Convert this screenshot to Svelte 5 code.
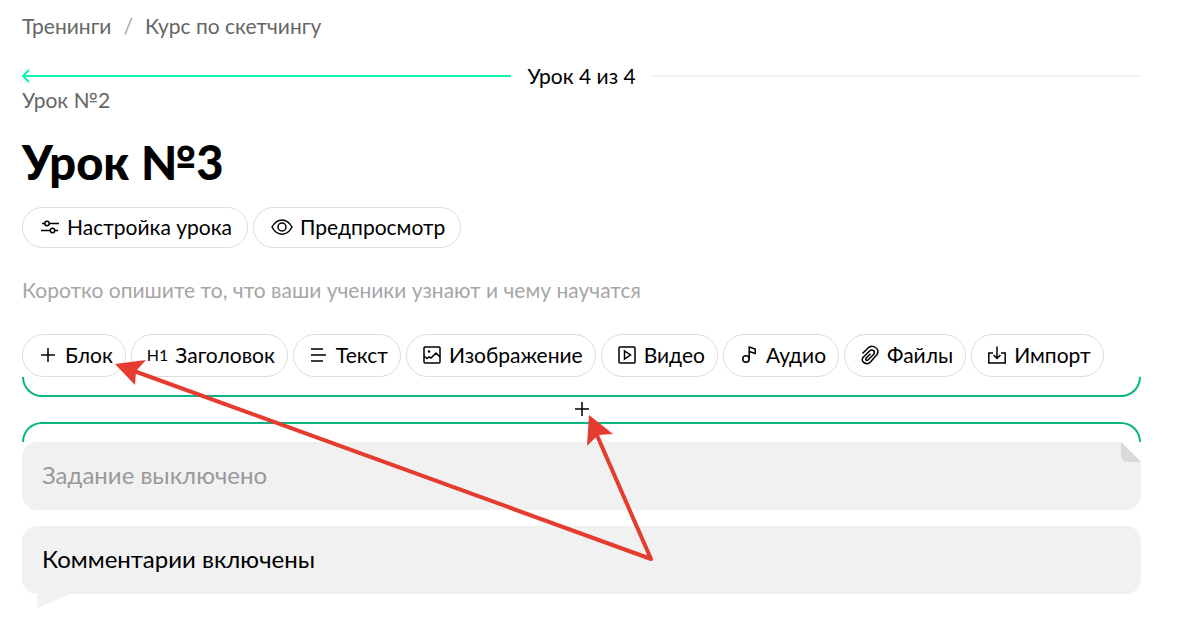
<script>
	let summary = '';

	const blocks = [
		{ id: 'block', label: 'Блок' },
		{ id: 'heading', label: 'Заголовок' },
		{ id: 'text', label: 'Текст' },
		{ id: 'image', label: 'Изображение' },
		{ id: 'video', label: 'Видео' },
		{ id: 'audio', label: 'Аудио' },
		{ id: 'files', label: 'Файлы' },
		{ id: 'import', label: 'Импорт' }
	];
</script>

<main class="page">
	<nav class="breadcrumbs">
		<a href="#trainings">Тренинги</a>
		<span class="slash">/</span>
		<a href="#course">Курс по скетчингу</a>
	</nav>

	<div class="progress">
		<div class="line done">
			<svg class="arrow-left" width="8" height="14" viewBox="0 0 8 14">
				<path d="M7 1 1 7l6 6" />
			</svg>
		</div>
		<span class="counter">Урок 4 из 4</span>
		<div class="line"></div>
	</div>
	<a class="prev" href="#lesson-2">Урок №2</a>

	<h1>Урок №3</h1>

	<div class="actions">
		<button class="pill">
			<svg class="icon" width="18" height="20" viewBox="0 0 18 20">
				<path d="M1 6.500h3M8 6.500h10M0 13.500h9M14 13.500h3" />
				<circle cx="6" cy="6.500" r="2.200" />
				<circle cx="11.500" cy="13.500" r="2.200" />
			</svg>
			Настройка урока
		</button>
		<button class="pill">
			<svg class="icon" width="20" height="20" viewBox="0 0 20 20">
				<path d="M0 10C5 .5 15 .5 20 10 15 19.500 5 19.500 0 10z" />
				<circle cx="10" cy="10" r="4" />
			</svg>
			Предпросмотр
		</button>
	</div>

	<input
		class="summary"
		type="text"
		aria-label="Описание урока"
		placeholder="Коротко опишите то, что ваши ученики узнают и чему научатся"
		bind:value={summary}
	/>

	<div class="toolbar">
		{#each blocks as block}
			<button class="pill tall">
				{#if block.id === 'heading'}
					<span class="h1-mark">H1</span>
				{:else}
					<svg class="icon" width="20" height="20" viewBox="0 0 20 20">
						{#if block.id === 'block'}
							<path d="M10 3v14M3 10h14" />
						{:else if block.id === 'text'}
							<path d="M2 4h12M2 10h15M2 16h12" />
						{:else if block.id === 'image'}
							<rect x="2" y="2" width="16" height="16" rx="1" />
							<path d="M2 11l3 2.500 2-1.500 2 1 5-5 4 4" />
							<circle class="dot" cx="7" cy="6.500" r="1.200" />
						{:else if block.id === 'video'}
							<rect x="2" y="2" width="16" height="16" rx="1" />
							<path d="M7.500 6v8l6-4z" />
						{:else if block.id === 'audio'}
							<circle cx="7" cy="14" r="3.200" />
							<path d="M10.200 14V2l6 2v4.500l-6-2" />
						{:else if block.id === 'files'}
							<path
								d="M2.500 8.500l5.500-5.500c4.500-4.500 12.500 1 9 6.500l-6.500 7.500C6.500 21 0 16.500 3 12.500L9.500 6c3-2.500 6.500.5 4 3.500L8 15c-1.500 1-3-.5-1.800-2l4.300-4.300"
							/>
						{:else}
							<path d="M6 8H1.800v10h16.400V8H14M10 1.500v11.500M6.500 10l3.500 3.500 3.500-3.500" />
						{/if}
					</svg>
				{/if}
				{block.label}
			</button>
		{/each}
	</div>

	<div class="bracket bottom"></div>
	<button class="add" aria-label="Добавить блок">
		<svg class="icon" width="16" height="16" viewBox="0 0 16 16">
			<path d="M8 1v14M1 8h14" />
		</svg>
	</button>
	<div class="bracket top"></div>

	<button class="bar task">
		Задание выключено
		<svg class="fold" width="20" height="20" viewBox="0 0 20 20">
			<path class="cut" d="M0 0h20v20z" />
			<path class="flap" d="M0 0v13q0 7 7 7h13z" />
		</svg>
	</button>
	<button class="bar comments">
		Комментарии включены
		<svg class="tail" width="36" height="15" viewBox="0 0 36 15">
			<path d="M0 0h36L0 15z" />
		</svg>
	</button>

	<svg class="pointers" width="1199" height="623" viewBox="0 0 1199 623">
		<path class="shaft" d="M134 371 651 559 596 433" />
		<path class="head" d="M115 364l31-4-10 11-1 14z" />
		<path class="head" d="M589 415l24 19-15 1-11 11z" />
	</svg>
</main>

<style>
	:global(body) {
		margin: 0;
		background: #fff;
	}

	.page {
		position: relative;
		box-sizing: border-box;
		padding: 12px 58px 28px 22px;
		font-family: Lato, 'Open Sans', sans-serif;
		font-size: 21px;
		line-height: 28px;
		color: #000;
		overflow: hidden;
	}

	a {
		color: #666;
		text-decoration: none;
	}

	button {
		margin: 0;
		font: inherit;
		color: inherit;
		cursor: pointer;
	}

	.breadcrumbs {
		display: flex;
		gap: 12px;
	}

	.slash {
		color: #aaa;
	}

	.progress {
		display: flex;
		align-items: center;
		gap: 16px;
		margin-top: 22px;
	}

	.line {
		position: relative;
		flex: 1;
		height: 2px;
		background: #f1f1f1;
	}

	.done {
		background: #13f2b0;
	}

	.arrow-left {
		position: absolute;
		left: 0;
		top: -6px;
		fill: none;
		stroke: #13f2b0;
		stroke-width: 2;
	}

	.prev {
		display: block;
		line-height: 20px;
	}

	h1 {
		margin: 24px 0 17px;
		font-size: 47px;
		line-height: 56px;
		font-weight: 900;
	}

	.actions,
	.toolbar {
		display: flex;
		flex-wrap: wrap;
		gap: 5px;
	}

	.pill {
		display: flex;
		align-items: center;
		justify-content: center;
		gap: 8px;
		box-sizing: border-box;
		height: 41px;
		padding: 0 15px 1px 18px;
		border: 1px solid #dcdcdc;
		border-radius: 22px;
		background: #fff;
		white-space: nowrap;
	}

	.tall {
		gap: 7px;
		height: 43px;
		padding: 0 12px 1px 15px;
	}

	.icon {
		flex: none;
		fill: none;
		stroke: #000;
		stroke-width: 1.5;
		overflow: visible;
	}

	.dot {
		fill: #000;
		stroke: none;
	}

	.h1-mark {
		font-size: 16px;
	}

	.summary {
		display: block;
		box-sizing: border-box;
		width: 100%;
		margin: 26px 0 30px;
		padding: 0;
		border: 0;
		outline: 0;
		background: none;
		font: inherit;
		height: 30px;
	}

	.summary::placeholder {
		color: #a6a6a6;
		opacity: 1;
	}

	.bracket {
		box-sizing: border-box;
		height: 20px;
		border: 2px solid #0ab583;
	}

	.bottom {
		border-top: 0;
		border-radius: 0 0 20px 20px;
	}

	.top {
		border-bottom: 0;
		border-radius: 20px 20px 0 0;
	}

	.add {
		display: flex;
		align-items: center;
		justify-content: center;
		box-sizing: border-box;
		width: 100%;
		height: 25px;
		padding: 0 0 2px;
		border: 0;
		background: none;
	}

	.bar {
		position: relative;
		display: block;
		box-sizing: border-box;
		width: 100%;
		height: 68px;
		padding: 0 20px 2px;
		border: 0;
		border-radius: 15px;
		background: #f1f1f1;
		font-size: 24px;
		text-align: left;
	}

	.task {
		color: #999;
	}

	.comments {
		margin-top: 16px;
	}

	.fold {
		position: absolute;
		top: 0;
		right: 0;
	}

	.cut {
		fill: #fff;
	}

	.flap {
		fill: #d9d9d9;
	}

	.tail {
		position: absolute;
		left: 15px;
		top: 67px;
		fill: #f1f1f1;
	}

	.pointers {
		position: absolute;
		left: 0;
		top: 0;
		pointer-events: none;
	}

	.shaft {
		fill: none;
		stroke: #e53c2f;
		stroke-width: 4;
		stroke-linejoin: round;
	}

	.head {
		fill: #e53c2f;
	}
</style>
